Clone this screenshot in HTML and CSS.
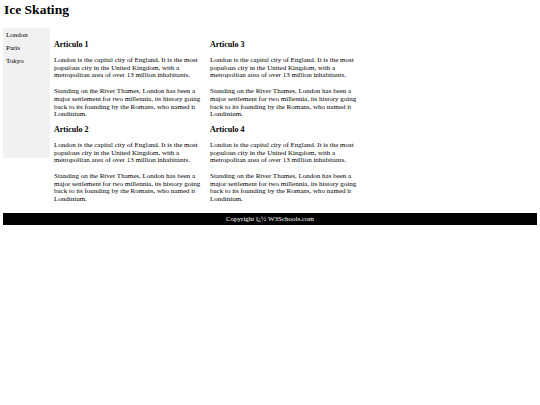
FILE: index.html
```html
<!DOCTYPE html>
<html>
<head>
<meta charset="utf-8">
<title>Ice Skating</title>
<link rel="stylesheet" href="styles.css">
</head>
<body>
<h1 class="title">Ice Skating</h1>
<div class="main">
  <ul class="nav">
    <li>London</li>
    <li>Paris</li>
    <li>Tokyo</li>
  </ul>
  <div class="content">
    <div class="article">
      <h2>Articulo 1</h2>
      <p>London is the capital city of England. It is the most populous city in the United Kingdom, with a metropolitan area of over 13 million inhabitants.</p>
      <p>Standing on the River Thames, London has been a major settlement for two millennia, its history going back to its founding by the Romans, who named it Londinium.</p>
    </div>
    <div class="article">
      <h2>Articulo 3</h2>
      <p>London is the capital city of England. It is the most populous city in the United Kingdom, with a metropolitan area of over 13 million inhabitants.</p>
      <p>Standing on the River Thames, London has been a major settlement for two millennia, its history going back to its founding by the Romans, who named it Londinium.</p>
    </div>
    <div class="article">
      <h2>Articulo 2</h2>
      <p>London is the capital city of England. It is the most populous city in the United Kingdom, with a metropolitan area of over 13 million inhabitants.</p>
      <p>Standing on the River Thames, London has been a major settlement for two millennia, its history going back to its founding by the Romans, who named it Londinium.</p>
    </div>
    <div class="article">
      <h2>Articulo 4</h2>
      <p>London is the capital city of England. It is the most populous city in the United Kingdom, with a metropolitan area of over 13 million inhabitants.</p>
      <p>Standing on the River Thames, London has been a major settlement for two millennia, its history going back to its founding by the Romans, who named it Londinium.</p>
    </div>
  </div>
</div>
<div class="footer">Copyright ï¿½ W3Schools.com</div>
</body>
</html>
```
FILE: styles.css
```css
html, body {
  background: #ffffff;
}
body {
  margin: 0 3px;
  font-family: "Liberation Serif", "Times New Roman", serif;
  color: #000000;
}
.title {
  font-size: 13.5px;
  line-height: 16px;
  font-weight: bold;
  margin: 0;
  padding: 2px 1px 0;
}
.main {
  display: flex;
  align-items: flex-start;
  margin-top: 10px;
}
.nav {
  list-style: none;
  margin: 0;
  padding: 3px 3px;
  width: 47px;
  height: 130px;
  box-sizing: border-box;
  background: #f1f1f1;
  font-size: 7px;
}
.nav li {
  line-height: 8px;
  margin-bottom: 5px;
}
.content {
  display: grid;
  grid-template-columns: 156px 156px;
  padding-left: 4px;
  padding-top: 12px;
}
.article h2 {
  font-size: 8px;
  line-height: 9px;
  margin: 0 0 8px;
}
.article p {
  font-size: 7px;
  line-height: 7.7px;
  margin: 0 0 8px;
  padding-right: 8px;
}
.article p:last-child {
  margin-bottom: 6px;
}
.footer {
  margin-top: 3px;
  background: #000000;
  color: #ffffff;
  text-align: center;
  font-size: 7px;
  line-height: 12px;
  height: 12px;
}
```
